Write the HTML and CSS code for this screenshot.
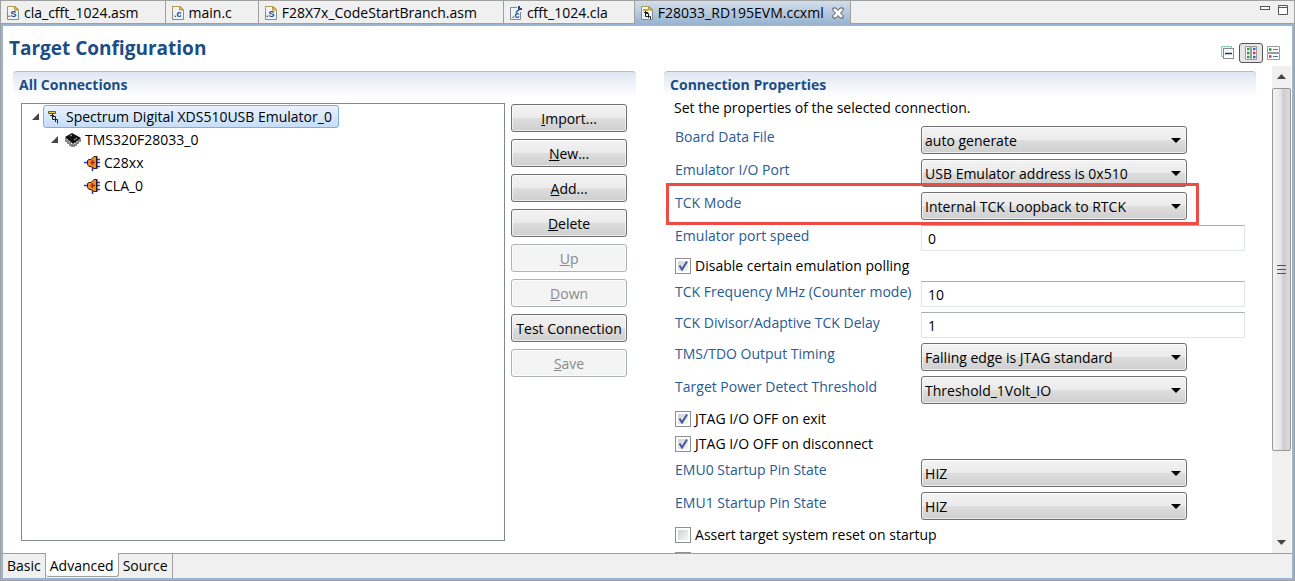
FILE: index.html
```html
<!DOCTYPE html>
<html lang="en">
<head>
  <meta charset="UTF-8" />
  <meta name="viewport" content="width=device-width, initial-scale=1.0"/>
  <title>F28033_RD195EVM.ccxml</title>
  <link rel="stylesheet" href="styles.css">
</head>
<body>

  <!-- shared icons -->
  <svg class="defs" aria-hidden="true">
    <symbol id="page" viewBox="0 0 12 14">
      <path d="M.5 .5H8L11.500 4V13.500H.5Z" fill="#eef4fa" stroke="#7f8a94"/>
      <path d="M.5 6V.5H8L11.500 4V6" fill="none" stroke="#b09a52"/>
      <path d="M7.500 .5V4H11.500Z" fill="#e8c25a" stroke="#b8943a"/>
    </symbol>
    <symbol id="probe" viewBox="0 0 12 14">
      <path d="M.5 1.500H7.500V3.500H.5Z" fill="#e3c93c" stroke="#6b5a14"/>
      <path d="M2 5.500H6M4.500 4V9.500H7.500V12M4.500 6.500H7.500V9.500M7.500 9.500H9.500V13.500" fill="none" stroke="#222"/>
    </symbol>
    <symbol id="core" viewBox="0 0 16 16">
      <path d="M0 7.500H4M13 4.500H16M13 7.500H16M13 11.500H16M8.500 12V16" stroke="#2436c8" stroke-width="1.500"/>
      <path d="M3.500 5.500L5 4.500H7L10 1.500H12.500V13.500H10L7 11.500H5L3.500 9.500Z" fill="#f08a2c" stroke="#3a1c08"/>
      <path d="M13 1V14" stroke="#2a1408"/>
      <path d="M8.500 5V10M6.500 7.500H11" stroke="#a8300c" stroke-width="1.500"/>
    </symbol>
  </svg>

  <div class="editor">
    <nav class="file-tabs">
      <button class="file-tab"><svg class="file-icon" viewBox="0 0 12 14"><use href="#page"/><text x="1" y="11">.S</text></svg>cla_cfft_1024.asm</button>
      <button class="file-tab"><svg class="file-icon" viewBox="0 0 12 14"><use href="#page"/><text x="2" y="11">.c</text></svg>main.c</button>
      <button class="file-tab"><svg class="file-icon" viewBox="0 0 12 14"><use href="#page"/><text x="1" y="11">.S</text></svg>F28X7x_CodeStartBranch.asm</button>
      <button class="file-tab">
        <svg class="file-icon" viewBox="0 0 12 14"><path d="M7 1.500H.5V13.500H10.500V6" fill="#eef4fa" stroke="#7f8a94"/><text x="2" y="12">.c</text><path d="M6 6.500L9.500 3" stroke="#2b4a7c" stroke-width="1.500"/><path d="M8 0V4H12V2H10V0Z" fill="#2b4a7c"/></svg>cfft_1024.cla</button>
      <button class="file-tab active">
        <svg class="file-icon" viewBox="0 0 12 14"><use href="#page"/><path d="M2 3H7V5H2Z" fill="#c9a92c"/><path d="M3 6.500H7M4.500 5V10.500H7M5 7.500H7.500V12M7.500 10.500H9.500V13" fill="none" stroke="#222"/></svg>F28033_RD195EVM.ccxml
        <svg class="close" viewBox="0 0 12 12"><path d="M1 1H4L6 3.500L8 1H11V3.500L8.500 6L11 8.500V11H8L6 8.500L4 11H1V8.500L3.500 6L1 3.500Z" fill="#fff" stroke="#555"/></svg>
      </button>
      <div class="window-buttons">
        <button aria-label="Minimize"><svg width="10" height="10"><rect x=".5" y="1.500" width="9" height="3" fill="#fff" stroke="#555"/></svg></button>
        <button aria-label="Maximize"><svg width="10" height="10"><path d="M.5 .5H9.500V9.500H.5ZM.5 2.500H9.500" fill="#fff" stroke="#555"/></svg></button>
      </div>
    </nav>

    <header class="form-header">
      <h1>Target Configuration</h1>
      <div class="toolbar">
        <button aria-label="Collapse all"><svg width="14" height="14"><path d="M10.500 2V.5H.5V10.500H2" fill="#e6f6f0" stroke="#8cc8b8"/><rect x="2.500" y="2.500" width="10" height="10" fill="#fff" stroke="#8a8a8a"/><path d="M4 7.500H11" stroke="#12376e" stroke-width="1.500"/></svg></button>
        <button class="pressed" aria-label="Horizontal layout"><svg width="14" height="14"><path d="M1.500 .5H6.500V13.500H1.500ZM7.500 .5H12.500V13.500H7.500Z" fill="#fff" stroke="#9a9a9a"/><path d="M3 3H5.500M3 7H5.500M3 11H5.500" stroke="#1fa044" stroke-width="2.500"/><path d="M9 3H11.500M9 11H11.500" stroke="#2a5fd0" stroke-width="2.500"/><path d="M9 7H11.500" stroke="#cc3a3a" stroke-width="2.500"/></svg></button>
        <button aria-label="Vertical layout"><svg width="14" height="14"><path d="M.5 .5H12.500V6.500H.5ZM.5 7.500H12.500V13.500H.5Z" fill="#fff" stroke="#9a9a9a"/><path d="M2 3.500H4.500" stroke="#1fa044" stroke-width="2.500"/><path d="M2 10.500H4.500" stroke="#cc3a3a" stroke-width="2.500"/><path d="M6 3.500H11M6 10.500H11" stroke="#4a74b8"/></svg></button>
      </div>
    </header>

    <main class="form-body">
      <section class="section">
        <h2>All Connections</h2>
        <div class="connections">
          <ul class="tree">
            <li><svg class="twisty" viewBox="0 0 7 7"><path d="M7 0V7H0Z"/></svg><span class="node selected"><svg viewBox="0 0 16 16"><use href="#probe" x="2" y="1" width="12" height="14"/></svg>Spectrum Digital XDS510USB Emulator_0</span></li>
            <li class="level-2"><svg class="twisty" viewBox="0 0 7 7"><path d="M7 0V7H0Z"/></svg><span class="node"><svg viewBox="0 0 16 16"><path d="M1 6V10M3 8V12M5 10V14M7 12V15M9 12V15M11 10V14M13 8V12M15 7V10" stroke="#111"/><path d="M0 5L7 1L16 6L8 12Z" fill="#111"/><path d="M5 4L7 3M12 6L9 8" stroke="#bbb"/></svg>TMS320F28033_0</span></li>
            <li class="level-3"><span class="node"><svg viewBox="0 0 16 16"><use href="#core"/></svg>C28xx</span></li>
            <li class="level-3"><span class="node"><svg viewBox="0 0 16 16"><use href="#core"/></svg>CLA_0</span></li>
          </ul>
          <div class="actions">
            <button class="btn"><u>I</u>mport...</button>
            <button class="btn"><u>N</u>ew...</button>
            <button class="btn"><u>A</u>dd...</button>
            <button class="btn"><u>D</u>elete</button>
            <button class="btn" disabled><u>U</u>p</button>
            <button class="btn" disabled><u>D</u>own</button>
            <button class="btn">Test Connection</button>
            <button class="btn" disabled><u>S</u>ave</button>
          </div>
        </div>
      </section>

      <section class="section">
        <h2>Connection Properties</h2>
        <p>Set the properties of the selected connection.</p>
        <form class="properties">
          <div class="field">
            <label for="board">Board Data File</label>
            <select id="board"><option>auto generate</option></select>
          </div>
          <div class="field">
            <label for="port">Emulator I/O Port</label>
            <select id="port"><option>USB Emulator address is 0x510</option></select>
          </div>
          <div class="field marked">
            <label for="tck-mode">TCK Mode</label>
            <select id="tck-mode"><option>Internal TCK Loopback to RTCK</option></select>
          </div>
          <div class="field">
            <label for="speed">Emulator port speed</label>
            <input type="text" id="speed" value="0" />
          </div>
          <label class="check"><input type="checkbox" checked />Disable certain emulation polling</label>
          <div class="field">
            <label for="freq">TCK Frequency MHz (Counter mode)</label>
            <input type="text" id="freq" value="10" />
          </div>
          <div class="field">
            <label for="divisor">TCK Divisor/Adaptive TCK Delay</label>
            <input type="text" id="divisor" value="1" />
          </div>
          <div class="field">
            <label for="timing">TMS/TDO Output Timing</label>
            <select id="timing"><option>Falling edge is JTAG standard</option></select>
          </div>
          <div class="field">
            <label for="threshold">Target Power Detect Threshold</label>
            <select id="threshold"><option>Threshold_1Volt_IO</option></select>
          </div>
          <label class="check"><input type="checkbox" checked />JTAG I/O OFF on exit</label>
          <label class="check"><input type="checkbox" checked />JTAG I/O OFF on disconnect</label>
          <div class="field">
            <label for="emu0">EMU0 Startup Pin State</label>
            <select id="emu0"><option>HIZ</option></select>
          </div>
          <div class="field">
            <label for="emu1">EMU1 Startup Pin State</label>
            <select id="emu1"><option>HIZ</option></select>
          </div>
          <label class="check"><input type="checkbox" />Assert target system reset on startup</label>
          <label class="check"><input type="checkbox" aria-label="Next option" /></label>
        </form>
      </section>

      <div class="scrollbar">
        <svg class="arrow" viewBox="0 0 9 5"><path d="M0 5L4.500 0L9 5Z"/></svg>
        <div class="thumb"><i></i><i></i><i></i></div>
        <svg class="arrow" viewBox="0 0 9 5"><path d="M0 0L4.500 5L9 0Z"/></svg>
      </div>
    </main>

    <nav class="page-tabs">
      <button>Basic</button>
      <button class="active">Advanced</button>
      <button>Source</button>
    </nav>
  </div>

</body>
</html>
```
FILE: styles.css
```css
:root {
  --title: #1b4d86;
  --label: #2a5a94;
  --frame: #99b4d1;
  --line: #a0a0a0;
  --bar: #f0f0f0;
}

* {
  box-sizing: border-box;
}

body {
  margin: 0;
  height: 100vh;
  font-family: "Open Sans", "Noto Sans", sans-serif;
  font-size: 14px;
  line-height: 22px;
  color: #000;
  background: #fff;
}

button, input, select {
  font: inherit;
  color: inherit;
}

button {
  padding: 0;
  border: none;
  background: none;
}

h1, h2, p, ul {
  margin: 0;
  padding: 0;
}

.defs {
  display: none;
}

.editor {
  height: 100%;
  display: flex;
  flex-direction: column;
  border: 1px solid var(--line);
}

/* file tabs */
.file-tabs {
  display: flex;
  height: 25px;
  flex: none;
  background: var(--bar);
  border-bottom: 2px solid var(--frame);
}

.file-tab {
  display: flex;
  align-items: center;
  gap: 5px;
  padding: 1px 26px 0 6px;
  border-right: 1px solid var(--line);
  border-bottom: 1px solid var(--line);
  white-space: nowrap;
}

.file-tab.active {
  padding-right: 6px;
  border-bottom: none;
  background: linear-gradient(#d3deeb, var(--frame));
}

.file-icon {
  width: 12px;
  height: 14px;
  flex: none;
}

.file-icon text {
  font: bold 9px "Liberation Sans", sans-serif;
  fill: #1f3f78;
}

.close {
  width: 12px;
  height: 12px;
  margin-left: 3px;
}

.window-buttons {
  flex: 1;
  display: flex;
  justify-content: flex-end;
  align-items: flex-start;
  gap: 8px;
  padding: 4px 6px 0 0;
  border-bottom: 1px solid var(--line);
}

.window-buttons button,
.toolbar button {
  display: flex;
}

/* form heading */
.form-header {
  display: flex;
  justify-content: space-between;
  align-items: center;
  height: 40px;
  flex: none;
  padding: 4px 11px 0 6px;
  border: solid var(--frame);
  border-width: 0 2px;
}

h1 {
  font-size: 19px;
  color: var(--title);
}

.toolbar {
  display: flex;
  align-items: center;
  gap: 4px;
  padding-top: 10px;
}

.toolbar .pressed {
  padding: 2px 4px;
  border: 1px solid #555;
  border-radius: 3px;
  background: #e6e6e6;
}

.form-body {
  flex: 1;
  min-height: 0;
  display: grid;
  grid-template-columns: 20fr 28px 19fr 16px 19px;
  grid-template-rows: minmax(0, 1fr);
  padding: 0 1px 0 10px;
  border: solid var(--frame);
  border-width: 0 2px;
}

.section {
  display: flex;
  flex-direction: column;
  padding-top: 5px;
  overflow: hidden;
}

.section + .section {
  grid-column: 3;
}

h2 {
  height: 26px;
  flex: none;
  padding-left: 6px;
  border-top: 1px solid #a9bfd6;
  border-radius: 4px 4px 0 0;
  background: linear-gradient(#dfe7f1, #fff);
  font-size: 14px;
  line-height: 26px;
  color: var(--title);
}

/* connections */
.connections {
  flex: 1;
  display: flex;
  gap: 6px;
  padding: 6px 9px 12px 8px;
}

.tree {
  flex: 1;
  border: 1px solid #828790;
  padding: 1px 10px;
  list-style: none;
}

.tree li {
  display: flex;
  align-items: center;
  gap: 4px;
  height: 23px;
}

.tree .level-2 {
  padding-left: 19px;
}

.tree .level-3 {
  padding-left: 49px;
}

.twisty {
  width: 7px;
  height: 7px;
  fill: #444;
}

.node {
  display: flex;
  align-items: center;
  gap: 4px;
  height: 23px;
  padding: 0 6px 0 2px;
  border: 1px solid transparent;
  border-radius: 3px;
  white-space: nowrap;
}

.node.selected {
  border-color: #84acdd;
  background: linear-gradient(#eaf3fd, #c6ddf8);
}

.node svg {
  width: 16px;
  height: 16px;
}

.actions {
  display: flex;
  flex-direction: column;
  gap: 7px;
  width: 116px;
  padding-top: 1px;
}

.btn, select {
  height: 28px;
  padding-top: 1px;
  border: 1px solid #707070;
  border-radius: 3px;
  background: linear-gradient(#f3f3f3, #ebebeb 48%, #dddddd 52%, #cfcfcf);
  box-shadow: inset 0 0 0 1px rgba(255, 255, 255, 0.6);
  white-space: nowrap;
}

.btn:disabled {
  color: #8a8a8a;
  border-color: #adb2b5;
  background: #f4f4f4;
}

/* properties */
.section p {
  padding: 0 10px;
}

.properties {
  display: flex;
  flex-direction: column;
  gap: 5px;
  padding: 7px 11px 0;
}

.field {
  display: flex;
  align-items: flex-start;
}

.field label {
  width: 246px;
  flex: none;
  color: var(--label);
  white-space: nowrap;
}

select {
  width: 266px;
  padding: 1px 24px 0 3px;
  appearance: none;
  background:
    url("data:image/svg+xml,%3Csvg xmlns='http://www.w3.org/2000/svg' width='10' height='5'%3E%3Cpath d='M0 0H10L5 5Z'/%3E%3C/svg%3E") no-repeat right 5px center,
    linear-gradient(#f3f3f3, #ebebeb 48%, #dddddd 52%, #cfcfcf);
}

input[type="text"] {
  flex: 1;
  min-width: 0;
  height: 26px;
  padding: 0 6px;
  border: 1px solid #e2e5ea;
  border-top-color: #abadb3;
}

.marked {
  position: relative;
  align-self: flex-start;
}

.marked::after {
  content: "";
  position: absolute;
  inset: -9px -12px -5px -9px;
  border: 3px solid #ee4b44;
  pointer-events: none;
}

.check {
  display: flex;
  align-items: center;
  gap: 4px;
  height: 20px;
  flex: none;
}

.check input {
  appearance: none;
  width: 16px;
  height: 16px;
  margin: 0;
  border: 1px solid #8e8f8f;
  background: linear-gradient(135deg, #cfd2d6, #f6f6f6) content-box;
  padding: 2px;
}

.check input:checked {
  background:
    url("data:image/svg+xml,%3Csvg xmlns='http://www.w3.org/2000/svg' width='14' height='14'%3E%3Cpath d='M3.500 6.500L6 10.500L11 2.500' fill='none' stroke='%23405a9c' stroke-width='2'/%3E%3C/svg%3E") no-repeat center,
    linear-gradient(135deg, #cfd2d6, #f6f6f6) content-box;
}

/* scrollbar */
.scrollbar {
  grid-column: 5;
  display: flex;
  flex-direction: column;
  align-items: center;
  padding: 8px 0;
  background: var(--bar);
}

.arrow {
  width: 9px;
  height: 5px;
  flex: none;
  fill: #444;
}

.thumb {
  width: 100%;
  height: 77%;
  margin: 9px 0 auto;
  display: flex;
  flex-direction: column;
  justify-content: center;
  align-items: center;
  gap: 3px;
  border: 1px solid #979797;
  border-radius: 2px;
  background: linear-gradient(90deg, #f5f5f5, #e6e6e8 45%, #cdced1 60%, #dcdcde);
}

.thumb i {
  width: 9px;
  height: 1px;
  background: #555;
}

/* page tabs */
.page-tabs {
  display: flex;
  height: 27px;
  flex: none;
  background: var(--bar);
  border: 2px solid var(--frame);
  border-top: 1px solid var(--line);
}

.page-tabs button {
  padding: 0 4px;
  border-right: 1px solid var(--line);
}

.page-tabs .active {
  margin: -1px 0 1px;
  padding: 2px 4px 0;
  border-bottom: 1px solid var(--line);
  border-radius: 0 0 3px 3px;
  background: #fff;
}
```
